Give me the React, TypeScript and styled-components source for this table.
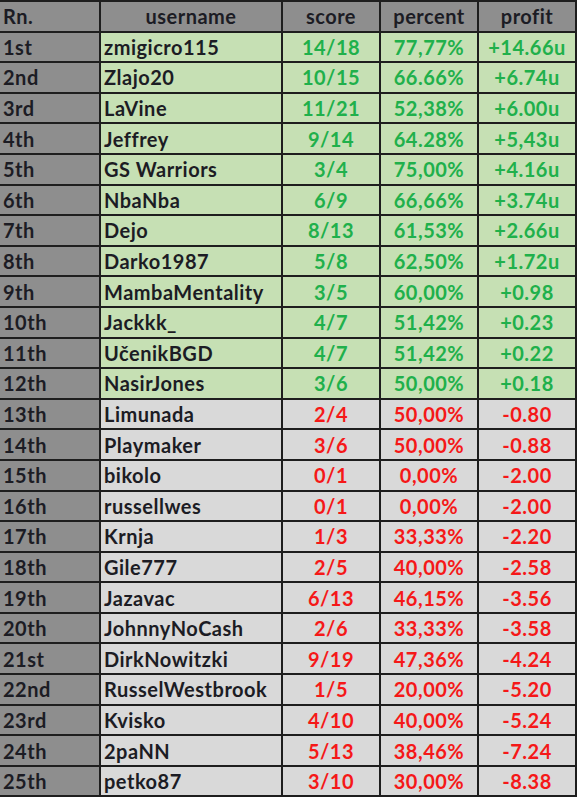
import React from "react";
import styled, { createGlobalStyle } from "styled-components";

const Global = createGlobalStyle`
  html, body { margin: 0; padding: 0; background: #ffffff; }
  body { font-family: Lato, "Open Sans", sans-serif; }
`;

type Row = [string, string, string, string, string];

const rows: Row[] = [
  ["1st", "zmigicro115", "14/18", "77,77%", "+14.66u"],
  ["2nd", "Zlajo20", "10/15", "66.66%", "+6.74u"],
  ["3rd", "LaVine", "11/21", "52,38%", "+6.00u"],
  ["4th", "Jeffrey", "9/14", "64.28%", "+5,43u"],
  ["5th", "GS Warriors", "3/4", "75,00%", "+4.16u"],
  ["6th", "NbaNba", "6/9", "66,66%", "+3.74u"],
  ["7th", "Dejo", "8/13", "61,53%", "+2.66u"],
  ["8th", "Darko1987", "5/8", "62,50%", "+1.72u"],
  ["9th", "MambaMentality", "3/5", "60,00%", "+0.98"],
  ["10th", "Jackkk_", "4/7", "51,42%", "+0.23"],
  ["11th", "UčenikBGD", "4/7", "51,42%", "+0.22"],
  ["12th", "NasirJones", "3/6", "50,00%", "+0.18"],
  ["13th", "Limunada", "2/4", "50,00%", "-0.80"],
  ["14th", "Playmaker", "3/6", "50,00%", "-0.88"],
  ["15th", "bikolo", "0/1", "0,00%", "-2.00"],
  ["16th", "russellwes", "0/1", "0,00%", "-2.00"],
  ["17th", "Krnja", "1/3", "33,33%", "-2.20"],
  ["18th", "Gile777", "2/5", "40,00%", "-2.58"],
  ["19th", "Jazavac", "6/13", "46,15%", "-3.56"],
  ["20th", "JohnnyNoCash", "2/6", "33,33%", "-3.58"],
  ["21st", "DirkNowitzki", "9/19", "47,36%", "-4.24"],
  ["22nd", "RusselWestbrook", "1/5", "20,00%", "-5.20"],
  ["23rd", "Kvisko", "4/10", "40,00%", "-5.24"],
  ["24th", "2paNN", "5/13", "38,46%", "-7.24"],
  ["25th", "petko87", "3/10", "30,00%", "-8.38"],
];

const Table = styled.div`
  width: 577px;
  display: grid;
  grid-template-columns: 101px 182px 98px 98px 98px;
  grid-auto-rows: 30.6px;
  border-top: 2px solid #1e1e1e;
  box-sizing: border-box;
`;

type Tone = "head" | "rank" | "pos" | "neg";

const bgFor: Record<Tone, string> = {
  head: "#8e8e8e",
  rank: "#8e8e8e",
  pos: "#c6e0b4",
  neg: "#d9d9d9",
};

const Cell = styled.div<{ $tone: Tone; $align: "left" | "center"; $color: string }>`
  background: ${(p) => bgFor[p.$tone]};
  color: ${(p) => p.$color};
  border-right: 2px solid #1e1e1e;
  border-bottom: 2px solid #1e1e1e;
  box-sizing: border-box;
  display: flex;
  align-items: center;
  justify-content: ${(p) => (p.$align === "left" ? "flex-start" : "center")};
  padding-left: ${(p) => (p.$align === "left" ? "3px" : "0")};
  font-family: Lato, "Open Sans", sans-serif;
  font-weight: 700;
  font-size: 20px;
  letter-spacing: 0.5px;
  line-height: 1;
  white-space: nowrap;
  overflow: hidden;
`;

const DARK = "#1c1c24";
const GREEN = "#20b04b";
const RED = "#f51818";

export default function App() {
  const head = ["Rn.", "username", "score", "percent", "profit"];
  return (
    <>
      <Global />
      <Table>
        {head.map((h, i) => (
          <Cell key={h} $tone="head" $align={i === 0 ? "left" : "center"} $color={DARK}>
            {h}
          </Cell>
        ))}
        {rows.map((r, idx) => {
          const tone: Tone = idx < 12 ? "pos" : "neg";
          const c = tone === "pos" ? GREEN : RED;
          return (
            <React.Fragment key={r[0]}>
              <Cell $tone="rank" $align="left" $color={DARK}>{r[0]}</Cell>
              <Cell $tone={tone} $align="left" $color={DARK}>{r[1]}</Cell>
              <Cell $tone={tone} $align="center" $color={c}>{r[2]}</Cell>
              <Cell $tone={tone} $align="center" $color={c}>{r[3]}</Cell>
              <Cell $tone={tone} $align="center" $color={c}>{r[4]}</Cell>
            </React.Fragment>
          );
        })}
      </Table>
    </>
  );
}
